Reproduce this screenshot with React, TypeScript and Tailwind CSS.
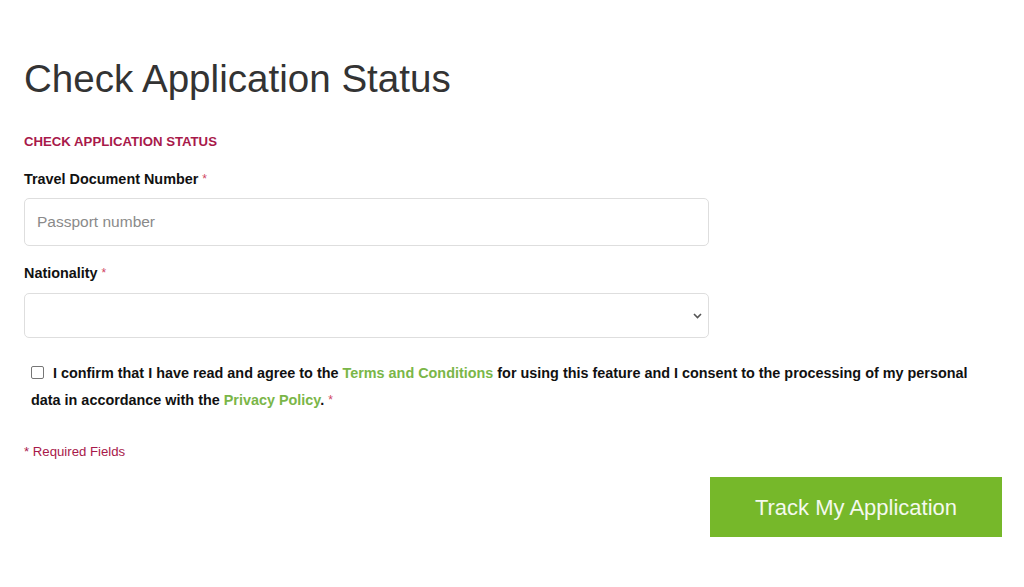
import React from "react";

export default function App() {
  return (
    <div
      className="w-[1024px] h-[587px] bg-white overflow-hidden"
      style={{ fontFamily: '"Liberation Sans", Arial, sans-serif' }}
    >
      <div className="flex flex-col pl-[24px] pr-[22px] pt-[58px]">
        <h1 className="text-[38.6px] leading-[42px] text-[#333333] font-normal">
          Check Application Status
        </h1>
        <div className="mt-[34px] text-[13.2px] leading-[16px] font-bold text-[#a8194a]">
          CHECK APPLICATION STATUS
        </div>
        <div className="w-[685px] flex flex-col">
          <label className="mt-[20px] text-[14.4px] leading-[18px] font-bold text-[#111111]">
            Travel Document Number <span className="text-[#d0455f] font-normal text-[12px] align-top">*</span>
          </label>
          <div className="mt-[10px] h-[48px] border border-[#dedede] rounded-[5px] flex items-center pl-[12px]">
            <span className="text-[15.5px] text-[#8a8a8a]">Passport number</span>
          </div>
          <label className="mt-[18px] text-[14.4px] leading-[18px] font-bold text-[#111111]">
            Nationality <span className="text-[#d0455f] font-normal text-[12px] align-top">*</span>
          </label>
          <div className="mt-[11px] h-[45px] border border-[#dedede] rounded-[5px] flex items-center justify-end pr-[6px]">
            <svg width="9" height="6" viewBox="0 0 9 6" fill="none">
              <path d="M1 1l3.5 3.5L8 1" stroke="#555" strokeWidth="1.6" />
            </svg>
          </div>
        </div>
        <p className="mt-[22px] pl-[7px] text-[14.4px] leading-[27px] font-bold text-[#111111] w-[960px]">
          <span className="inline-block w-[13px] h-[13px] border border-[#767676] rounded-[2px] align-[-1px] mr-[9px] bg-white" />
          I confirm that I have read and agree to the{" "}
          <span className="text-[#7ab648]">Terms and Conditions</span> for using this feature and I consent to the
          processing of my personal data in accordance with the{" "}
          <span className="text-[#7ab648]">Privacy Policy</span>.{" "}
          <span className="text-[#d0455f] font-normal text-[12px] align-top">*</span>
        </p>
        <div className="mt-[30px] text-[13.2px] leading-[16px] text-[#a8194a]">* Required Fields</div>
        <div className="mt-[17px] self-end w-[292px] h-[60px] bg-[#76b82a] flex items-center justify-center text-[22px] text-[#f4f9ee]">
          Track My Application
        </div>
      </div>
    </div>
  );
}
